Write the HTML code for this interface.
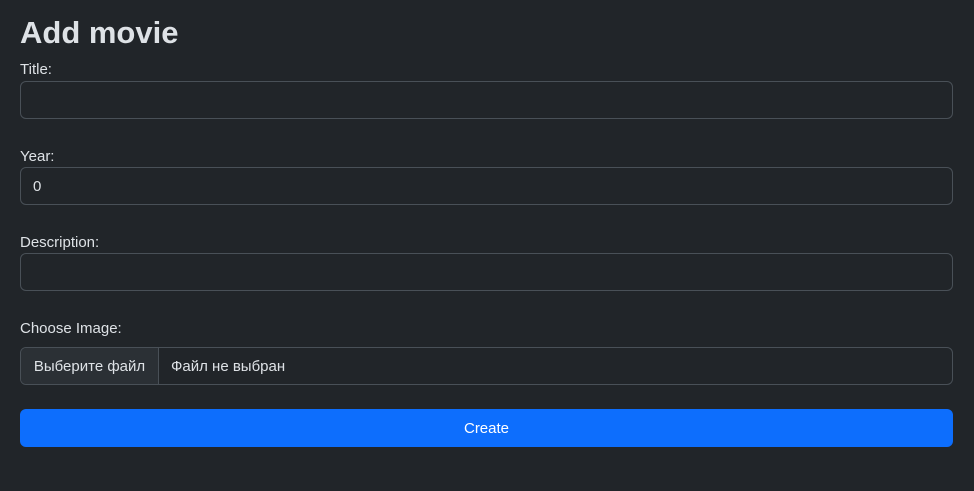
<!DOCTYPE html>
<html><head><meta charset="utf-8"><style>
*{box-sizing:border-box;margin:0;padding:0}
body{background:#212529;color:#dee2e6;font-family:"Liberation Sans","DejaVu Sans",sans-serif;font-size:15px;width:974px;height:491px;overflow:hidden;position:relative}
h1{position:absolute;left:20px;top:13px;font-size:31px;font-weight:bold;line-height:40px;color:#dee2e6}
.l{position:absolute;left:20px;font-size:15px;line-height:20px}
.i{position:absolute;left:20px;width:933px;height:38px;border:1px solid #495057;border-radius:6px;background:#212529;padding:0 12px;line-height:38px;font-size:15px}
.f{display:flex;padding:0}
.f .b{width:138px;background:#2b3035;border-right:1px solid #495057;border-radius:5px 0 0 5px;text-align:center}
.f .t{padding-left:12px}
.btn{position:absolute;left:20px;top:409px;width:933px;height:38px;background:#0d6efd;border-radius:6px;color:#fff;text-align:center;line-height:40px;font-size:15px}
</style></head><body>
<h1>Add movie</h1>
<div class="l" style="top:60px">Title:</div>
<div class="i" style="top:81px"></div>
<div class="l" style="top:147px">Year:</div>
<div class="i" style="top:167px">0</div>
<div class="l" style="top:233px">Description:</div>
<div class="i" style="top:253px"></div>
<div class="l" style="top:319px">Choose Image:</div>
<div class="i f" style="top:347px"><div class="b">Выберите файл</div><div class="t">Файл не выбран</div></div>
<div class="btn">Create</div>
</body></html>
